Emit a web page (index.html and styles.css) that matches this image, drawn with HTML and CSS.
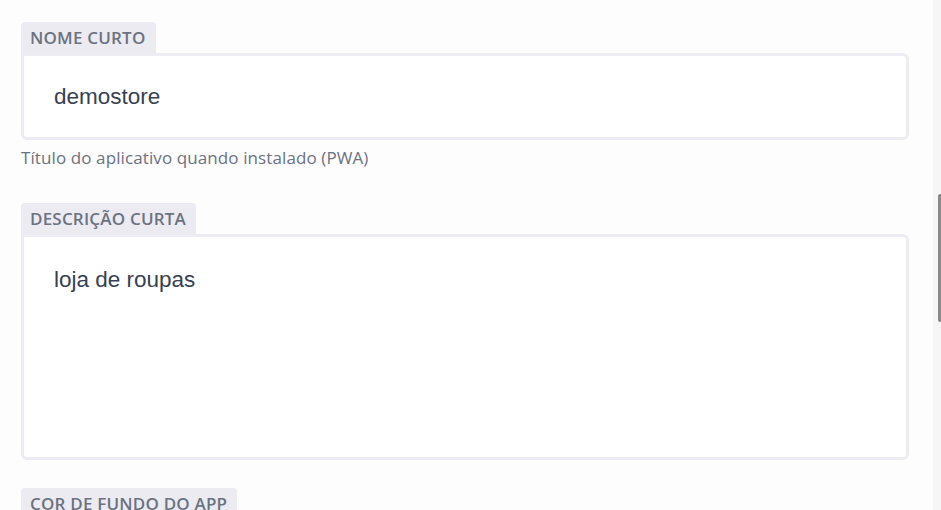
FILE: index.html
```html
<!DOCTYPE html>
<html lang="pt-br">
<head>
  <meta charset="UTF-8" />
  <meta name="viewport" content="width=device-width, initial-scale=1" />
  <title>Configurações do app</title>
  <link rel="stylesheet" href="styles.css">
</head>
<body>
  <div class="form">
    <div class="campo">
      <label class="rotulo" for="nomeCurto">Nome curto</label>
      <input class="entrada" id="nomeCurto" type="text" value="demostore">
      <div class="ajuda">Título do aplicativo quando instalado (PWA)</div>
    </div>

    <div class="campo">
      <label class="rotulo" for="descricao">Descrição curta</label>
      <textarea class="entrada area" id="descricao">loja de roupas</textarea>
    </div>

    <div class="campo">
      <label class="rotulo" for="corFundo">Cor de fundo do app</label>
    </div>
  </div>

  <div class="barra"><div class="barra-polegar"></div></div>
</body>
</html>
```

FILE: styles.css
```css
* {
  box-sizing: border-box;
}

body {
  margin: 0;
  background: #fdfdfe;
  font-family: "Open Sans", sans-serif;
  overflow: hidden;
  height: 510px;
}

.form {
  padding: 22px 0 0 21px;
  width: 909px;
}

.campo {
  display: flex;
  flex-direction: column;
  align-items: flex-start;
  margin-bottom: 28px;
}

.campo:first-child {
  margin-bottom: 35px;
}

.rotulo {
  display: block;
  background: #ecebf2;
  color: #6b7280;
  font-size: 17px;
  font-weight: 600;
  text-transform: uppercase;
  letter-spacing: 0.2px;
  line-height: 31px;
  padding: 0 10px 0 9px;
  border-radius: 4px 4px 0 0;
}

.entrada {
  display: block;
  width: 888px;
  height: 87px;
  border: 3px solid #ececf2;
  border-radius: 0 6px 6px 6px;
  background: #fff;
  padding: 0 30px;
  font-family: "Liberation Sans", Arial, sans-serif;
  font-size: 22.5px;
  color: #374151;
  outline: none;
}

.area {
  height: 226px;
  padding-top: 30px;
  resize: none;
  line-height: 26px;
}

.ajuda {
  margin-top: 8px;
  font-size: 17px;
  letter-spacing: 0.1px;
  color: #6b7280;
  line-height: 20px;
}

.barra {
  position: fixed;
  top: 0;
  right: 0;
  width: 8px;
  height: 100%;
  background: #f6f6f7;
}

.barra-polegar {
  position: absolute;
  top: 194px;
  right: 0;
  width: 3px;
  height: 128px;
  background: #8a8a8a;
  border-radius: 2px 0 0 2px;
}
```
